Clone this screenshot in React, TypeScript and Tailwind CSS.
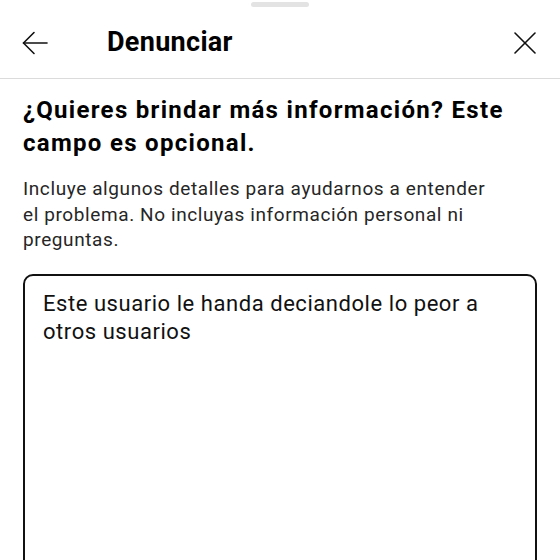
const App = () => {
    return (
        <div className="w-[560px] h-[560px] overflow-hidden bg-white text-black font-['Roboto','Liberation_Sans',sans-serif]">
            {/* Drag handle */}
            <div className="flex justify-center pt-[2px]">
                <div className="w-[58px] h-[5px] rounded-full bg-[#e3e3e3]"></div>
            </div>

            {/* Header */}
            <div className="flex items-center h-[72px] px-[22px] border-b border-[#dbdbdb]">
                <svg width="26" height="24" viewBox="0 0 26 24" fill="none" stroke="#111" strokeWidth="1.6" strokeLinecap="round" strokeLinejoin="round">
                    <path d="M25 12H1.5" />
                    <path d="M12 1.5L1.5 12L12 22.5" />
                </svg>
                <h1 className="ml-[59px] text-[27px] font-bold leading-none tracking-[0.3px]">Denunciar</h1>
                <svg className="ml-auto mr-[2px]" width="22" height="22" viewBox="0 0 22 22" fill="none" stroke="#111" strokeWidth="1.6" strokeLinecap="round">
                    <path d="M1 1L21 21" />
                    <path d="M21 1L1 21" />
                </svg>
            </div>

            {/* Body */}
            <div className="px-[23px] pt-[15px]">
                <h2 className="text-[24px] font-bold leading-[33px] tracking-[1.3px] whitespace-nowrap">
                    ¿Quieres brindar más información? Este
                    <br />
                    campo es opcional.
                </h2>
                <p className="mt-[16px] text-[19px] leading-[25.5px] tracking-[0.6px] text-[#262626] whitespace-nowrap">
                    Incluye algunos detalles para ayudarnos a entender
                    <br />
                    el problema. No incluyas información personal ni
                    <br />
                    preguntas.
                </p>
                <div className="mt-[21px] h-[320px] w-[514px] rounded-[10px] border-[2.5px] border-[#111] px-[18px] pt-[14px]">
                    <p className="text-[22px] leading-[28px] tracking-[0.55px] text-[#111] whitespace-nowrap">
                        Este usuario le handa deciandole lo peor a
                        <br />
                        otros usuarios
                    </p>
                </div>
            </div>
        </div>
    );
};

export default App;
